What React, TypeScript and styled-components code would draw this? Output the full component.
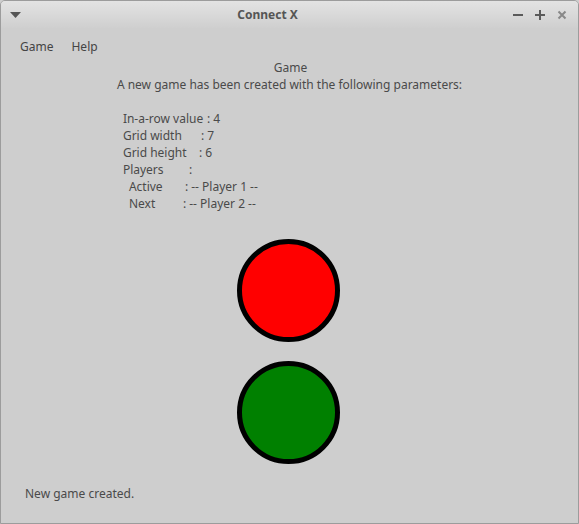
import React from 'react'
import styled, { createGlobalStyle } from 'styled-components'

const GlobalStyle = createGlobalStyle`
  html, body {
    margin: 0;
    padding: 0;
    background: #cecece;
  }
  body {
    font-family: "Noto Sans", "Open Sans", sans-serif;
    font-size: 12px;
    color: #4a4a4a;
  }
`

const Window = styled.div`
  width: 579px;
  height: 524px;
  box-sizing: border-box;
  border: 1px solid #9c9c9c;
  border-radius: 5px 5px 0 0;
  background: #cecece;
  display: flex;
  flex-direction: column;
  overflow: hidden;
  position: relative;
`

const TitleBar = styled.div`
  height: 27px;
  flex: none;
  display: flex;
  align-items: center;
  justify-content: space-between;
  padding: 0 10px 0 9px;
  background: linear-gradient(#e3e3e3, #cfcfcf);
`

const Title = styled.div`
  font-weight: bold;
  color: #555;
  font-size: 12px;
  position: absolute;
  left: 0;
  right: 44px;
  text-align: center;
  top: 5px;
  pointer-events: none;
`

const WinButtons = styled.div`
  display: flex;
  gap: 12px;
  align-items: center;
  padding-right: 1px;
`

const MenuBar = styled.div`
  display: flex;
  gap: 18px;
  padding: 10px 0 0 19px;
  height: 19px;
`

const MenuItem = styled.span`
  color: #444;
`

const Content = styled.div`
  flex: 1;
  display: flex;
  flex-direction: column;
  align-items: center;
  line-height: 17px;
`

const Heading = styled.div`
  margin-top: 2px;
  padding-left: 2px;
`

const Info = styled.div`
  display: flex;
  flex-direction: column;
  align-items: flex-start;
`

const Params = styled.div`
  margin-top: 17px;
  padding-left: 6px;
  display: flex;
  flex-direction: column;
`

const Row = styled.div<{ $indent?: boolean }>`
  display: flex;
  white-space: pre;
  padding-left: ${({ $indent }) => ($indent ? 6 : 0)}px;
`

const Key = styled.span<{ $w: number }>`
  width: ${({ $w }) => $w}px;
`

const Discs = styled.div`
  margin-top: 27px;
  display: flex;
  flex-direction: column;
  gap: 19px;
  padding-right: 2px;
`

const Disc = styled.div<{ $color: string }>`
  width: 93px;
  height: 93px;
  border-radius: 50%;
  border: 5px solid #000;
  background: ${({ $color }) => $color};
`

const Status = styled.div`
  padding: 0 0 21px 24px;
  line-height: 17px;
  color: #4a4a4a;
`

const params = [
  { key: 'In-a-row value', w: 84, value: '4' },
  { key: 'Grid width', w: 78, value: '7' },
  { key: 'Grid height', w: 76, value: '6' },
  { key: 'Players', w: 66, value: '' },
  { key: 'Active', w: 56, value: '-- Player 1 --', indent: true },
  { key: 'Next', w: 54, value: '-- Player 2 --', indent: true },
]

const App: React.FC = () => {
  return (
    <>
      <GlobalStyle />
      <Window>
        <TitleBar>
          <svg width="11" height="6" viewBox="0 0 11 6">
            <path d="M0 0 H11 L5.5 6 Z" fill="#555" />
          </svg>
          <Title>Connect X</Title>
          <WinButtons>
            <svg width="10" height="10" viewBox="0 0 10 10">
              <rect x="0" y="4" width="10" height="2" fill="#5a5a5a" />
            </svg>
            <svg width="10" height="10" viewBox="0 0 10 10">
              <rect x="0" y="4" width="10" height="2" fill="#5a5a5a" />
              <rect x="4" y="0" width="2" height="10" fill="#5a5a5a" />
            </svg>
            <svg width="10" height="10" viewBox="0 0 10 10">
              <path d="M1.5 1.5 L8.5 8.5 M8.5 1.5 L1.5 8.5" stroke="#888" strokeWidth="2" />
            </svg>
          </WinButtons>
        </TitleBar>
        <MenuBar>
          <MenuItem>Game</MenuItem>
          <MenuItem>Help</MenuItem>
        </MenuBar>
        <Content>
          <Heading>Game</Heading>
          <Info>
            <div>A new game has been created with the following parameters:</div>
            <Params>
              {params.map((p) => (
                <Row key={p.key} $indent={p.indent}>
                  <Key $w={p.w}>{p.key}</Key>
                  <span>{p.value ? `: ${p.value}` : ':'}</span>
                </Row>
              ))}
            </Params>
          </Info>
          <Discs>
            <Disc $color="#ff0000" />
            <Disc $color="#008000" />
          </Discs>
        </Content>
        <Status>New game created.</Status>
      </Window>
    </>
  )
}

export default App
